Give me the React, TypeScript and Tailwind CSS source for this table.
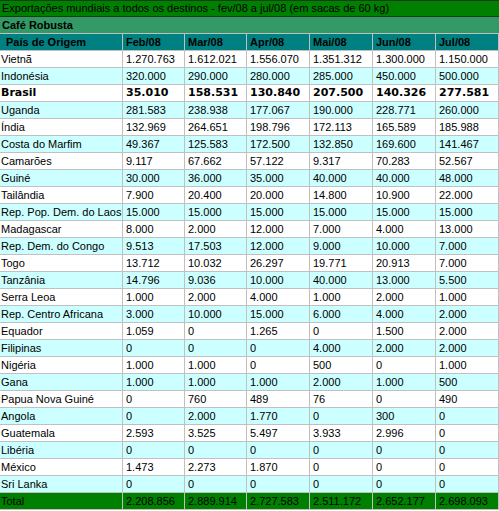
import React from 'react'

type Row = { pais: string; valores: string[]; bold?: boolean }

const meses = ['Feb/08', 'Mar/08', 'Apr/08', 'Mai/08', 'Jun/08', 'Jul/08']

const linhas: Row[] = [
  { pais: 'Vietnã', valores: ['1.270.763', '1.612.021', '1.556.070', '1.351.312', '1.300.000', '1.150.000'] },
  { pais: 'Indonésia', valores: ['320.000', '290.000', '280.000', '285.000', '450.000', '500.000'] },
  { pais: 'Brasil', valores: ['35.010', '158.531', '130.840', '207.500', '140.326', '277.581'], bold: true },
  { pais: 'Uganda', valores: ['281.583', '238.938', '177.067', '190.000', '228.771', '260.000'] },
  { pais: 'Índia', valores: ['132.969', '264.651', '198.796', '172.113', '165.589', '185.988'] },
  { pais: 'Costa do Marfim', valores: ['49.367', '125.583', '172.500', '132.850', '169.600', '141.467'] },
  { pais: 'Camarões', valores: ['9.117', '67.662', '57.122', '9.317', '70.283', '52.567'] },
  { pais: 'Guiné', valores: ['30.000', '36.000', '35.000', '40.000', '40.000', '48.000'] },
  { pais: 'Tailândia', valores: ['7.900', '20.400', '20.000', '14.800', '10.900', '22.000'] },
  { pais: 'Rep. Pop. Dem. do Laos', valores: ['15.000', '15.000', '15.000', '15.000', '15.000', '15.000'] },
  { pais: 'Madagascar', valores: ['8.000', '2.000', '12.000', '7.000', '4.000', '13.000'] },
  { pais: 'Rep. Dem. do Congo', valores: ['9.513', '17.503', '12.000', '9.000', '10.000', '7.000'] },
  { pais: 'Togo', valores: ['13.712', '10.032', '26.297', '19.771', '20.913', '7.000'] },
  { pais: 'Tanzânia', valores: ['14.796', '9.036', '10.000', '40.000', '13.000', '5.500'] },
  { pais: 'Serra Leoa', valores: ['1.000', '2.000', '4.000', '1.000', '2.000', '1.000'] },
  { pais: 'Rep. Centro Africana', valores: ['3.000', '10.000', '15.000', '6.000', '4.000', '2.000'] },
  { pais: 'Equador', valores: ['1.059', '0', '1.265', '0', '1.500', '2.000'] },
  { pais: 'Filipinas', valores: ['0', '0', '0', '4.000', '2.000', '2.000'] },
  { pais: 'Nigéria', valores: ['1.000', '1.000', '0', '500', '0', '1.000'] },
  { pais: 'Gana', valores: ['1.000', '1.000', '1.000', '2.000', '1.000', '500'] },
  { pais: 'Papua Nova Guiné', valores: ['0', '760', '489', '76', '0', '490'] },
  { pais: 'Angola', valores: ['0', '2.000', '1.770', '0', '300', '0'] },
  { pais: 'Guatemala', valores: ['2.593', '3.525', '5.497', '3.933', '2.996', '0'] },
  { pais: 'Libéria', valores: ['0', '0', '0', '0', '0', '0'] },
  { pais: 'México', valores: ['1.473', '2.273', '1.870', '0', '0', '0'] },
  { pais: 'Sri Lanka', valores: ['0', '0', '0', '0', '0', '0'] },
]

const totais = ['2.208.856', '2.889.914', '2.727.583', '2.511.172', '2.652.177', '2.698.093']

const grade = 'grid grid-cols-[123px_62px_62px_63px_63px_63px_63px]'
const celula = 'h-[17px] border-r border-b border-[#c0c0c0] leading-[16px] whitespace-nowrap overflow-hidden'

export default function App() {
  return (
    <div className="w-[499px] h-[511px] bg-white text-[#000] text-[11px] font-['Liberation_Sans',Arial,sans-serif] overflow-hidden">
      <div className="h-[17px] bg-[#008000] text-[#000] border-y border-[#1a3a1a] pl-[2px] leading-[15px] whitespace-nowrap">
        Exportações mundiais a todos os destinos - fev/08 a jul/08 (em sacas de 60 kg)
      </div>
      <div className="h-[17px] bg-[#339966] text-[#000] border-b border-[#c0c0c0] pl-[2px] leading-[16px] font-bold">
        Café Robusta
      </div>
      <div className={`${grade} bg-[#008080] text-[#000] font-bold`}>
        <div className={`${celula} pl-[6px]`}>País de Origem</div>
        {meses.map(m => (
          <div key={m} className={`${celula} pl-[3px]`}>{m}</div>
        ))}
      </div>
      {linhas.map((l, i) => (
        <div
          key={l.pais}
          className={`${grade} ${i % 2 === 1 ? 'bg-[#ccffff]' : 'bg-white'} ${l.bold ? "font-bold text-[11px] font-['DejaVu_Sans',Verdana,sans-serif]" : ''}`}
        >
          <div className={`${celula} pl-[1px]`}>{l.pais}</div>
          {l.valores.map((v, j) => (
            <div key={j} className={`${celula} pl-[3px]`}>{v}</div>
          ))}
        </div>
      ))}
      <div className={`${grade} bg-[#008000] text-[#000]`}>
        <div className={`${celula} pl-[1px]`}>Total</div>
        {totais.map((t, j) => (
          <div key={j} className={`${celula} pl-[3px]`}>{t}</div>
        ))}
      </div>
    </div>
  )
}
